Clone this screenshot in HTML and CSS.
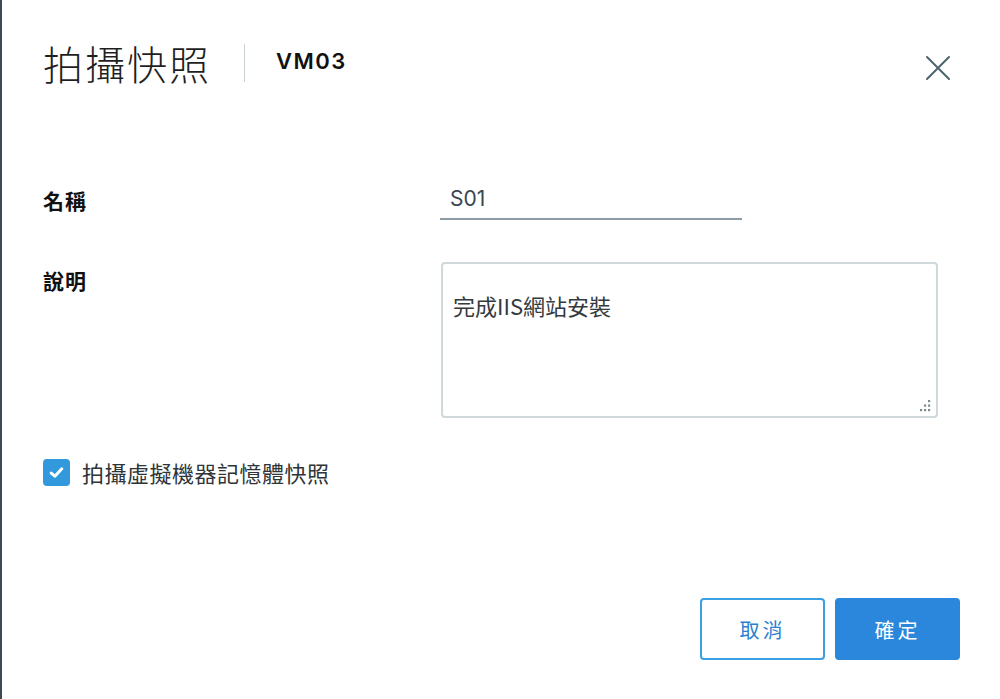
FILE: index.html
```html
<!DOCTYPE html>
<html lang="zh-Hant">
<head>
  <meta charset="UTF-8">
  <meta name="viewport" content="width=device-width, initial-scale=1.0">
  <title>拍攝快照</title>
  <link rel="stylesheet" href="styles.css">
</head>
<body>
  <div class="dialog">
    <header class="dialog-header">
      <h1 class="dialog-title">拍攝快照</h1>
      <span class="title-divider"></span>
      <span class="vm-name">VM03</span>
      <button class="close-button" aria-label="關閉">
        <svg xmlns="http://www.w3.org/2000/svg" width="26" height="26" viewBox="0 0 26 26" fill="none" stroke="currentColor" stroke-width="2" stroke-linecap="round">
          <path d="M2 2 L24 24 M24 2 L2 24"></path>
        </svg>
      </button>
    </header>

    <form class="snapshot-form">
      <div class="form-row">
        <label class="form-label" for="snapshot-name">名稱</label>
        <input class="text-input" id="snapshot-name" type="text" value="S01">
      </div>

      <div class="form-row form-row-top">
        <label class="form-label" for="snapshot-desc">說明</label>
        <div class="textarea-wrapper">
          <textarea class="text-area" id="snapshot-desc">完成IIS網站安裝</textarea>
          <svg class="resize-grip" xmlns="http://www.w3.org/2000/svg" width="14" height="14" viewBox="0 0 14 14" fill="#7d8a91">
            <rect x="10" y="1" width="2.2" height="2.2"></rect>
            <rect x="6" y="5.5" width="2.2" height="2.2"></rect>
            <rect x="10" y="5.5" width="2.2" height="2.2"></rect>
            <rect x="2" y="10" width="2.2" height="2.2"></rect>
            <rect x="6" y="10" width="2.2" height="2.2"></rect>
            <rect x="10" y="10" width="2.2" height="2.2"></rect>
          </svg>
        </div>
      </div>

      <label class="checkbox-row">
        <span class="checkbox">
          <svg xmlns="http://www.w3.org/2000/svg" width="17" height="17" viewBox="0 0 16 16" fill="none" stroke="white" stroke-width="2.8" stroke-linecap="round" stroke-linejoin="round">
            <path d="M3 8.5 L6.5 11.5 L13 4.5"></path>
          </svg>
        </span>
        <span class="checkbox-label">拍攝虛擬機器記憶體快照</span>
      </label>

      <div class="dialog-footer">
        <button type="button" class="btn btn-outline">取消</button>
        <button type="button" class="btn btn-primary">確定</button>
      </div>
    </form>
  </div>
</body>
</html>
```

FILE: styles.css
```css
body {
  margin: 0;
  padding: 0;
  background-color: #ffffff;
  font-family: "Noto Sans CJK TC", "Noto Sans", sans-serif;
  color: #222222;
}

.dialog {
  box-sizing: border-box;
  height: 699px;
  padding: 0 40px 0 41px;
  border-left: 2px solid #3b4a53;
}

.dialog-header {
  display: flex;
  align-items: center;
  padding-top: 40px;
}

.dialog-title {
  margin: 0;
  font-size: 40px;
  line-height: 46px;
  font-weight: 300;
  color: #1f1f1f;
  letter-spacing: 2px;
}

.title-divider {
  width: 1px;
  height: 38px;
  margin: 0 31px 0 33px;
  background-color: #c9d0d4;
}

.vm-name {
  font-family: Inter, "Noto Sans", sans-serif;
  font-size: 22px;
  font-weight: 600;
  letter-spacing: 1.5px;
  color: #111111;
  margin-top: -4px;
}

.close-button {
  margin-left: auto;
  margin-right: 9px;
  margin-top: 10px;
  padding: 0;
  background: none;
  border: none;
  color: #4c6470;
  cursor: pointer;
  display: flex;
}

.snapshot-form {
  margin-top: 98px;
}

.form-row {
  display: grid;
  grid-template-columns: 397px 302px;
  align-items: center;
}

.form-row-top {
  grid-template-columns: 398px 497px;
  align-items: start;
  margin-top: 42px;
}

.form-label {
  font-size: 21px;
  line-height: 36px;
  font-weight: 700;
  letter-spacing: 1px;
  color: #111111;
}

.form-row:first-child .form-label {
  margin-top: -4px;
}

.text-input {
  box-sizing: border-box;
  height: 36px;
  padding: 0 10px 6px 10px;
  border: none;
  border-bottom: 2px solid #8d9ca4;
  font-family: Inter, "Noto Sans", sans-serif;
  font-size: 21px;
  color: #3b4650;
  outline: none;
}

.textarea-wrapper {
  position: relative;
}

.text-area {
  display: block;
  box-sizing: border-box;
  width: 497px;
  height: 156px;
  padding: 26px 10px 0 10px;
  border: 2px solid #cfd9dc;
  border-radius: 4px;
  font-family: "Noto Sans CJK TC", "Noto Sans", sans-serif;
  font-size: 22px;
  line-height: 30px;
  color: #333a40;
  resize: none;
  outline: none;
}

.resize-grip {
  position: absolute;
  right: 6px;
  bottom: 5px;
}

.checkbox-row {
  display: flex;
  align-items: center;
  margin-top: 40px;
}

.checkbox {
  display: flex;
  align-items: center;
  justify-content: center;
  width: 27px;
  height: 27px;
  border-radius: 4px;
  background-color: #3199dc;
}

.checkbox-label {
  margin-left: 12px;
  font-size: 22px;
  line-height: 28px;
  letter-spacing: 0.5px;
  color: #2e3438;
}

.dialog-footer {
  display: flex;
  justify-content: flex-end;
  gap: 10px;
  margin-top: 112px;
}

.btn {
  box-sizing: border-box;
  width: 125px;
  height: 62px;
  border-radius: 4px;
  font-family: "Noto Sans CJK TC", "Noto Sans", sans-serif;
  font-size: 20px;
  letter-spacing: 3px;
  cursor: pointer;
}

.btn-outline {
  background-color: #ffffff;
  border: 2px solid #3aa0e2;
  color: #2c7fcf;
}

.btn-primary {
  background-color: #2a87dc;
  border: 2px solid #2a87dc;
  color: #ffffff;
}
```
